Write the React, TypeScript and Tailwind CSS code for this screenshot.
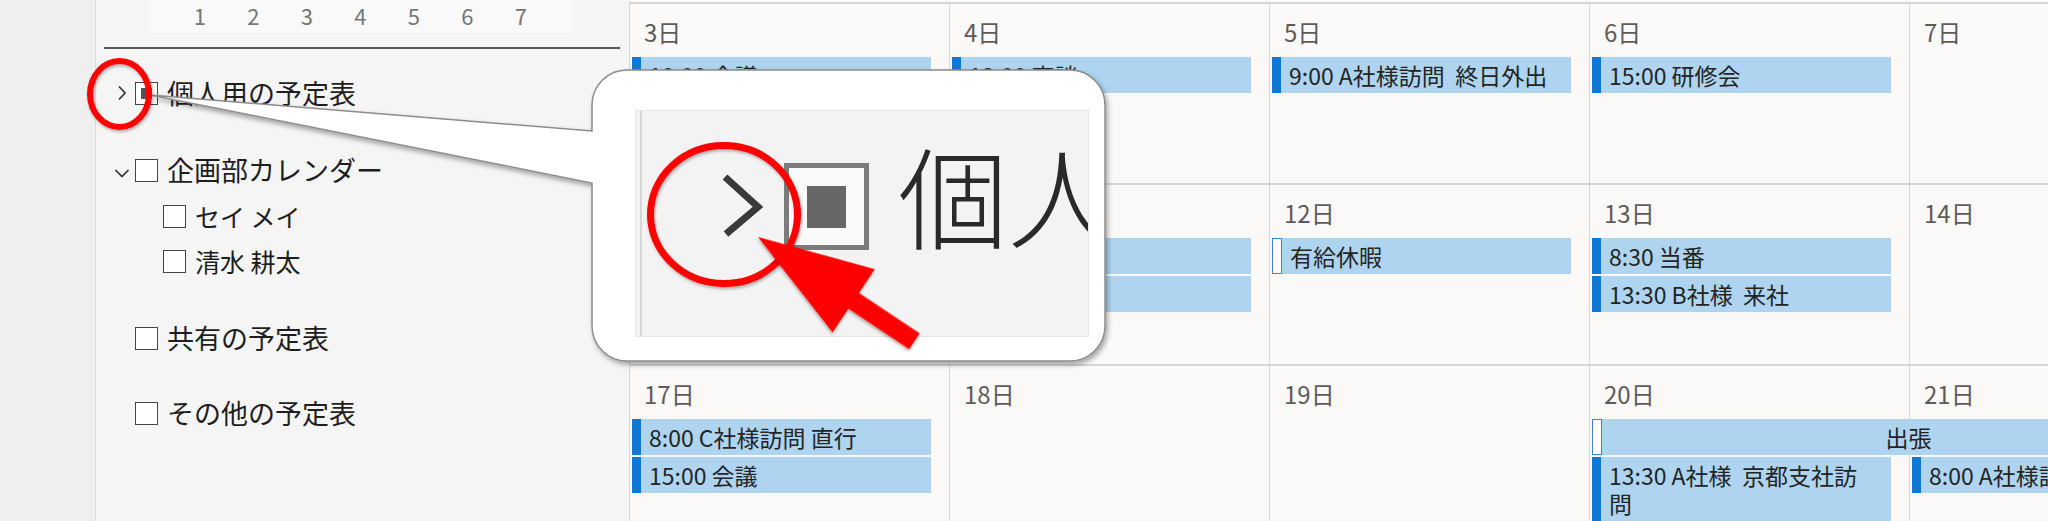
import React from "react";

type Ev = {
  text: React.ReactNode;
  col: number;
  row: 2 | 3;
  span2?: boolean;
  hollow?: boolean;
  center?: boolean;
};

const colStart = ["col-start-1", "col-start-2", "col-start-3", "col-start-4", "col-start-5"];

function EventBar({ ev }: { ev: Ev }) {
  return (
    <div
      className={`${colStart[ev.col]} ${ev.row === 2 ? "row-start-2" : "row-start-3"} ${
        ev.span2 ? "col-span-2" : ""
      } ml-[3px] mr-[18px] self-start flex min-h-[36px] bg-[#aed4f0]`}
    >
      {ev.hollow ? (
        <div className="w-[10px] shrink-0 bg-white border border-[#3d83d1]" />
      ) : (
        <div className="w-[9px] shrink-0 bg-[#0f78d4]" />
      )}
      <div
        className={`flex-1 pl-[8px] pr-[4px] py-[4px] text-[23px] leading-[28px] text-[#242424] whitespace-pre-wrap ${
          ev.center ? "text-center" : ""
        }`}
      >
        {ev.text}
      </div>
    </div>
  );
}

function Week({ days, events }: { days: string[]; events: Ev[] }) {
  return (
    <div className="grid grid-cols-[repeat(5,320px)] grid-rows-[51px_36px_auto_1fr] gap-y-[2px] h-[181px] border-t-2 border-[#d7d6d5]">
      {days.map((d, i) => (
        <div key={"bg" + i} className={`${colStart[i]} row-start-1 row-span-4 border-l border-[#d7d6d5]`} />
      ))}
      {days.map((d, i) => (
        <div
          key={"lb" + i}
          className={`${colStart[i]} row-start-1 pl-[15px] pt-[4px] flex items-center text-[24px] text-[#5f5b57]`}
        >
          {d}
        </div>
      ))}
      {events.map((ev, i) => (
        <EventBar key={i} ev={ev} />
      ))}
    </div>
  );
}

function Check({ filled }: { filled?: boolean }) {
  return (
    <div className="w-[23px] h-[23px] shrink-0 border-[1.5px] border-[#454545] bg-white flex items-center justify-center">
      {filled && <div className="w-[11px] h-[11px] bg-[#555]" />}
    </div>
  );
}

function ChevRight() {
  return (
    <svg width="10" height="16" viewBox="0 0 10 16">
      <polyline points="2,1.5 8,8 2,14.5" fill="none" stroke="#333" strokeWidth="1.7" />
    </svg>
  );
}

function ChevDown() {
  return (
    <svg width="16" height="10" viewBox="0 0 16 10" className="mt-[6px]">
      <polyline points="1.5,2 8,8.5 14.5,2" fill="none" stroke="#333" strokeWidth="1.7" />
    </svg>
  );
}

export default function App() {
  const week1: Ev[] = [
    { text: "10:00 会議", col: 0, row: 2 },
    { text: "13:00 商談", col: 1, row: 2 },
    { text: "9:00 A社様訪問  終日外出", col: 2, row: 2 },
    { text: "15:00 研修会", col: 3, row: 2 },
  ];
  const week2: Ev[] = [
    { text: "10:00 定例会", col: 1, row: 2 },
    { text: "16:00 打合せ", col: 1, row: 3 },
    { text: "有給休暇", col: 2, row: 2, hollow: true },
    { text: "8:30 当番", col: 3, row: 2 },
    { text: "13:30 B社様  来社", col: 3, row: 3 },
  ];
  const week3: Ev[] = [
    { text: "8:00 C社様訪問 直行", col: 0, row: 2 },
    { text: "15:00 会議", col: 0, row: 3 },
    { text: "出張", col: 3, row: 2, span2: true, hollow: true, center: true },
    {
      text: (
        <>
          13:30 A社様  京都支社訪
          <br />問
        </>
      ),
      col: 3,
      row: 3,
    },
    { text: "8:00 A社様訪問", col: 4, row: 3 },
  ];

  return (
    <div className="relative flex h-[521px] w-[2048px] overflow-hidden font-['Noto_Sans_CJK_JP',sans-serif] text-[#1e1e1e]">
      {/* left strip */}
      <div className="w-[96px] shrink-0 bg-[#efefef] border-r border-[#dcdcdc]" />

      {/* sidebar */}
      <div className="w-[533px] shrink-0 bg-[#f5f5f5] flex flex-col">
        <div className="ml-[53px] w-[424px] h-[33px] bg-[#f9f9f9] flex pl-[24px]">
          {["1", "2", "3", "4", "5", "6", "7"].map((n) => (
            <div key={n} className="w-[53.5px] text-center text-[22px] leading-[31px] text-[#767676]">
              {n}
            </div>
          ))}
        </div>
        <div className="mt-[14px] ml-[8px] w-[516px] h-[2px] bg-[#5a5a5a]" />

        <div className="mt-[24px] h-[40px] flex items-center pl-[16px]">
          <div className="w-[19px] flex justify-center">
            <ChevRight />
          </div>
          <div className="ml-[4px]">
            <Check filled />
          </div>
          <span className="ml-[9px] text-[27px]">個人用の予定表</span>
        </div>

        <div className="mt-[37px] h-[40px] flex items-center pl-[16px]">
          <div className="w-[19px] flex justify-center">
            <ChevDown />
          </div>
          <div className="ml-[4px]">
            <Check />
          </div>
          <span className="ml-[9px] text-[27px]">企画部カレンダー</span>
        </div>
        <div className="mt-[4px] h-[45px] flex items-center pl-[67px]">
          <Check />
          <span className="ml-[9px] text-[25px]">セイ メイ</span>
        </div>
        <div className="h-[45px] flex items-center pl-[67px]">
          <Check />
          <span className="ml-[9px] text-[25px]">清水 耕太</span>
        </div>

        <div className="mt-[34px] h-[40px] flex items-center pl-[39px]">
          <Check />
          <span className="ml-[9px] text-[27px]">共有の予定表</span>
        </div>
        <div className="mt-[35px] h-[40px] flex items-center pl-[39px]">
          <Check />
          <span className="ml-[9px] text-[27px]">その他の予定表</span>
        </div>
      </div>

      {/* calendar */}
      <div className="flex-1 overflow-hidden bg-[#faf9f8] pt-[2px]">
        <div className="w-[1600px]">
          <Week days={["3日", "4日", "5日", "6日", "7日"]} events={week1} />
          <Week days={["10日", "11日", "12日", "13日", "14日"]} events={week2} />
          <Week days={["17日", "18日", "19日", "20日", "21日"]} events={week3} />
        </div>
      </div>

      {/* callout shape */}
      <svg className="absolute left-0 top-0 pointer-events-none" width="2048" height="521" viewBox="0 0 2048 521">
        <defs>
          <filter id="sh" x="-10%" y="-10%" width="120%" height="130%">
            <feDropShadow dx="2" dy="3" stdDeviation="2.5" floodColor="#000" floodOpacity="0.35" />
          </filter>
        </defs>
        <path
          d="M150 95 L592 131 L592 105 A35 35 0 0 1 627 70 L1070 70 A35 35 0 0 1 1105 105 L1105 326 A35 35 0 0 1 1070 361 L627 361 A35 35 0 0 1 592 326 L592 183 Z"
          fill="#ffffff"
          stroke="#8c8c8c"
          strokeWidth="1.5"
          filter="url(#sh)"
        />
      </svg>

      {/* zoomed picture inside the callout */}
      <div className="absolute left-[635px] top-[110px] w-[454px] h-[227px] bg-[#f3f3f3] border border-[#e6e6e6] overflow-hidden flex items-start">
        <div className="ml-[4px] w-[2px] self-stretch bg-[#d6d6d6] shrink-0" />
        <svg width="48" height="70" viewBox="0 0 48 70" className="ml-[75px] mt-[59px] shrink-0">
          <polyline points="8,7 41,37 9,64" fill="none" stroke="#3a3a3a" strokeWidth="7" />
        </svg>
        <div className="ml-[19px] mt-[52px] w-[85px] h-[87px] shrink-0 border-[5px] border-[#7b7b7b] bg-[#fafafa] flex items-center justify-center">
          <div className="w-[39px] h-[42px] bg-[#676767]" />
        </div>
        <span className="ml-[29px] mt-[27px] text-[110px] font-light leading-none whitespace-nowrap text-[#2a2a2a]">
          個人
        </span>
      </div>

      {/* red annotations */}
      <svg className="absolute left-0 top-0 pointer-events-none" width="2048" height="521" viewBox="0 0 2048 521">
        <defs>
          <filter id="rs" x="-20%" y="-20%" width="140%" height="140%">
            <feDropShadow dx="1" dy="2" stdDeviation="1.5" floodColor="#000" floodOpacity="0.3" />
          </filter>
        </defs>
        <ellipse cx="119.5" cy="94" rx="29.5" ry="33" fill="none" stroke="#ff0000" strokeWidth="6" filter="url(#rs)" />
        <ellipse cx="724" cy="214.5" rx="73.5" ry="69" fill="none" stroke="#ff0000" strokeWidth="7" filter="url(#rs)" />
        <g transform="translate(758 237) rotate(33.7)" filter="url(#rs)">
          <polygon points="0,0 115,-38 115,-9.5 188,-9.5 188,9.5 115,9.5 115,38" fill="#ff0000" />
        </g>
      </svg>
    </div>
  );
}
